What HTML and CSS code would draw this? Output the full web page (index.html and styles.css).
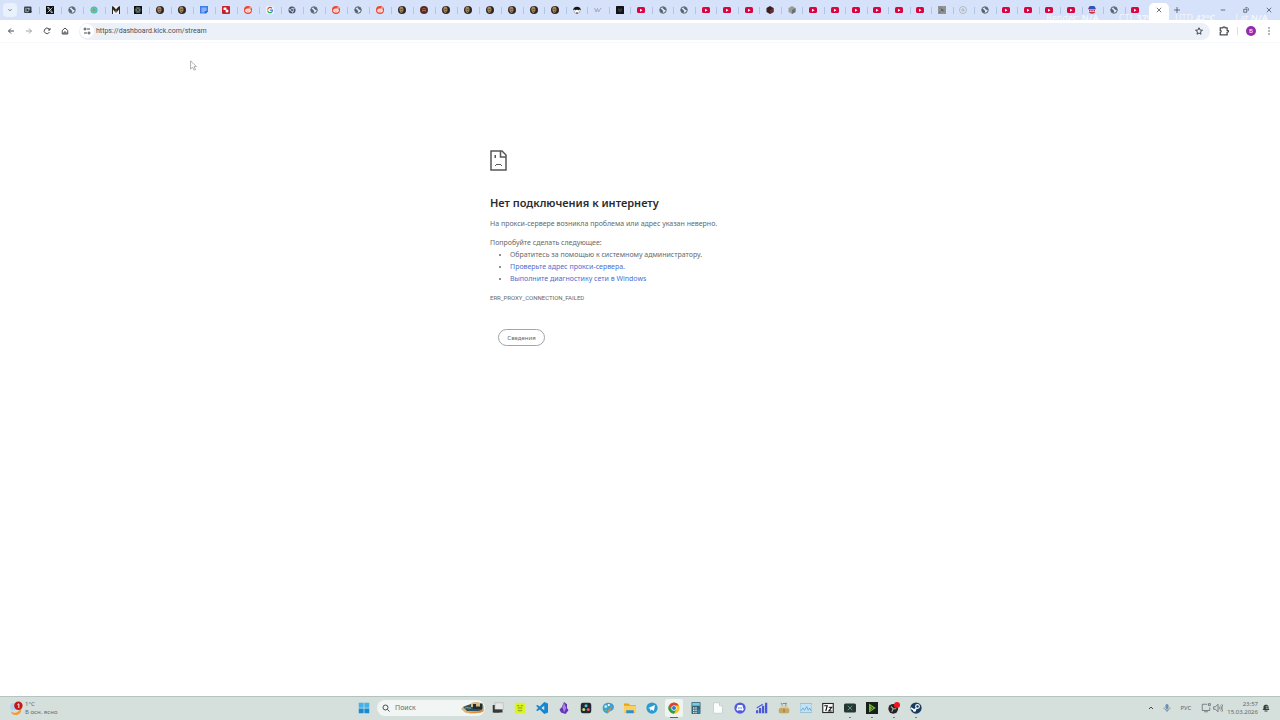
FILE: index.html
```
<!DOCTYPE html>
<html lang="ru">
<head>
    <meta charset="UTF-8">
    <meta name="viewport" content="width=device-width, initial-scale=1.0">
    <title>dashboard.kick.com</title>
    <link rel="stylesheet" href="styles.css">
</head>
<body>

    <!-- Favicons, used by the tab list in script.js -->
    <svg class="sprite" aria-hidden="true">
        <symbol id="media" viewBox="0 0 16 16"><rect x="0" y="1" width="15" height="13" rx="2" fill="#3d4a54"/><rect x="3" y="4" width="8" height="8" fill="#aebbc7"/><path d="M5 4v8l5-4z" fill="#222c33"/><circle cx="12" cy="11" r="3" fill="#26323a"/></symbol>
        <symbol id="x" viewBox="0 0 16 16"><rect width="16" height="16" fill="#0b0d10"/><path d="M3 3h3l7 10h-3zM13 3L3 13" stroke="#fff" stroke-width="1.3" fill="none"/></symbol>
        <symbol id="globe" viewBox="0 0 16 16"><circle cx="8" cy="8" r="6.500" fill="#d9e3f3" stroke="#54606f" stroke-width="2"/><path d="M2 6c2 0 4 1 5 2.500S8 10 8 11.500s-1 2-2 2C3 13 1 9 2 6zM7 2c1 1 0 2 1 3s2 1 2.500 2 1.500 1 3.500 1c0-3-2-6-7-6z" fill="#54606f"/></symbol>
        <symbol id="teal" viewBox="0 0 16 16"><circle cx="8" cy="8" r="7" fill="#4fb8a8"/><path d="M8 1v14M1 8h14M3 3l10 10M13 3L3 13" stroke="#6bd0bd" stroke-width="1.5"/><circle cx="8" cy="8" r="3" fill="#9a9a72"/></symbol>
        <symbol id="mask" viewBox="0 0 16 16"><rect width="16" height="16" fill="#f3f3f1"/><path d="M0 0l4 2 4 5 4-5 4-2v16h-2V7l-5 6H7L2 7v9H0z" fill="#29292b"/><path d="M7 9h2v5H7z" fill="#c5a073"/></symbol>
        <symbol id="atom" viewBox="0 0 16 16"><rect width="16" height="16" fill="#0d1414"/><g fill="none" stroke="#8d9995"><ellipse cx="8" cy="8" rx="6" ry="2.500"/><ellipse cx="8" cy="8" rx="6" ry="2.500" transform="rotate(60 8 8)"/><ellipse cx="8" cy="8" rx="6" ry="2.500" transform="rotate(120 8 8)"/></g></symbol>
        <symbol id="face" viewBox="0 0 16 16"><circle cx="8" cy="8" r="8" fill="#2c2523"/><path d="M4 2c4-2 7 0 7 5s-2 6-4 7c-4-1-6-8-3-12z" fill="#a3835b"/><path d="M5 7h4M6 11h3" stroke="#574334" stroke-width="1.5"/></symbol>
        <symbol id="redface" viewBox="0 0 16 16"><circle cx="8" cy="8" r="8" fill="#572b25"/><circle cx="8" cy="8" r="4" fill="#a36a50"/><path d="M5 7h6M6 11h4" stroke="#35201c" stroke-width="1.500"/></symbol>
        <symbol id="doc" viewBox="0 0 16 16"><path d="M0 0h16v11l-4 4H0z" fill="#3f7ce8"/><path d="M3 3h10v7H9v3H3z" fill="#86b2f7"/><path d="M11 15v-4h4z" fill="#1d4fb4"/></symbol>
        <symbol id="red" viewBox="0 0 16 16"><rect width="16" height="16" rx="2" fill="#c9202e"/><rect x="3" y="3" width="6" height="5" rx="1" fill="#fff"/><circle cx="10" cy="10" r="3" fill="#fff"/></symbol>
        <symbol id="reddit" viewBox="0 0 16 16"><circle cx="8" cy="8" r="8" fill="#ea4630"/><ellipse cx="8" cy="9" rx="5.500" ry="4" fill="#fff"/><circle cx="12" cy="4" r="1.500" fill="#fff"/><circle cx="6" cy="8" r="1.200" fill="#ee4b34"/><circle cx="10" cy="8" r="1.200" fill="#ee4b34"/><path d="M5.500 10.500c2 1.500 3 1.500 5 0" stroke="#ee4b34" fill="none"/></symbol>
        <symbol id="google" viewBox="0 0 16 16"><rect width="16" height="16" rx="4" fill="#f4f7fc"/><g fill="none" stroke-width="2.500"><path d="M12 4.500A5 5 0 0 0 3.500 6" stroke="#ea4335"/><path d="M3.500 6a5 5 0 0 0 0 4.500" stroke="#fbbc05"/><path d="M3.500 10.500a5 5 0 0 0 8 1.500" stroke="#34a853"/><path d="M11.500 12c1-1 1.500-2 1.500-4H8" stroke="#4285f4"/></g></symbol>
        <symbol id="darkchrome" viewBox="0 0 16 16"><circle cx="8" cy="8" r="7" fill="#454d61"/><path d="M8 4.500h6M5 10L2 5M11 10l-3 5" stroke="#dbe4f6" stroke-width="1.500"/><circle cx="8" cy="8" r="3" fill="#454d61" stroke="#dbe4f6" stroke-width="1.500"/></symbol>
        <symbol id="hat" viewBox="0 0 16 16"><circle cx="8" cy="9" r="6" fill="#fff" stroke="#777"/><path d="M0 8c1-9 15-9 16 0l-4-1-1 2-3-2-3 2-1-2z" fill="#141414"/><path d="M6 13h4v2H6z" fill="#333"/></symbol>
        <symbol id="w" viewBox="0 0 16 16"><path d="M1 4l3 8 3-7 2 7 5-8" stroke="#9a9c9f" stroke-width="1.500" fill="none"/></symbol>
        <symbol id="black" viewBox="0 0 16 16"><rect width="16" height="16" rx="1" fill="#101317"/><path d="M4 4l4 2 4-2v6l-4 3-4-3z" fill="#35363a"/></symbol>
        <symbol id="yt" viewBox="0 0 16 16"><rect y="2" width="16" height="12" rx="3" fill="#dc033e"/><path d="M6 5.500v6l5-3z" fill="#fff"/></symbol>
        <symbol id="redcube" viewBox="0 0 16 16"><path d="M8 0l7 4v8l-7 4-7-4V4z" fill="#3a2024"/><path d="M8 8l7-4v8l-7 4z" fill="#682d30"/></symbol>
        <symbol id="greycube" viewBox="0 0 16 16"><path d="M8 0l7 4v8l-7 4-7-4V4z" fill="#9a9b9b"/><path d="M8 8l7-4v8l-7 4z" fill="#6e7070"/></symbol>
        <symbol id="photo" viewBox="0 0 16 16"><rect width="16" height="16" fill="#8f9393"/><path d="M3 3h4v3H3zM9 7h4v5H9zM2 11h4v3H2z" fill="#7a7e80"/><circle cx="8" cy="8" r="2" fill="#4c5053"/></symbol>
        <symbol id="ring" viewBox="0 0 16 16"><circle cx="8" cy="8" r="7" fill="#dce5f2" stroke="#a2abb9" stroke-width="1.500"/><path d="M8 4v8M4 8h8" stroke="#a2abb9" stroke-width="1.500"/></symbol>
        <symbol id="club" viewBox="0 0 16 16"><circle cx="8" cy="8" r="7.500" fill="#d42f4a"/><path d="M1 6a7 7 0 0 1 14 0z" fill="#3552b5"/><path d="M0 7h16v5H0z" fill="#eef"/><path d="M2 8h3v3H2zM6.500 8h3v3h-3zM11 8h3v3h-3z" fill="#b32f4e"/></symbol>
    </svg>

    <header class="browser">
        <div class="tab-strip">
            <button class="tab-search" aria-label="Поиск вкладок">
                <svg class="icon-6" viewBox="0 0 8 8"><path d="M2 3l2 2 2-2" class="line"/></svg>
            </button>
            <div class="tabs" id="tabs"></div>
            <button class="tab-active" aria-label="Закрыть вкладку">
                <svg class="icon-6" viewBox="0 0 8 8"><path d="M1 1l6 6M7 1L1 7" class="line"/></svg>
            </button>
            <button class="tab-new" aria-label="Новая вкладка">
                <svg class="icon-6" viewBox="0 0 8 8"><path d="M4 0v8M0 4h8" class="line"/></svg>
            </button>
            <div class="window-buttons">
                <button aria-label="Свернуть"><svg class="icon-6" viewBox="0 0 8 8"><path d="M1 4h6" class="line"/></svg></button>
                <button aria-label="Развернуть"><svg class="icon-6" viewBox="0 0 8 8"><path d="M1 3h4v4H1zM3 1h3l1 1v3" class="line"/></svg></button>
                <button aria-label="Закрыть"><svg class="icon-6" viewBox="0 0 8 8"><path d="M1 1l6 6M7 1L1 7" class="line"/></svg></button>
            </div>
            <div class="stats"><span>Render: <b>N/A</b></span><span>CTL <b>37%</b></span><span>UTD <b>42°C</b></span><span>Lat <b>N/A</b></span></div>
        </div>

        <div class="toolbar">
            <button aria-label="Назад"><svg class="icon-8" viewBox="0 0 16 16"><path d="M14 8H3M8 3L3 8l5 5" class="line-2"/></svg></button>
            <button class="faded" aria-label="Вперёд"><svg class="icon-8" viewBox="0 0 16 16"><path d="M2 8h11M8 3l5 5-5 5" class="line-2"/></svg></button>
            <button aria-label="Обновить"><svg class="icon-8" viewBox="0 0 16 16"><path d="M13 10a5.500 5.500 0 1 1-1-6l2 2M14 2v4h-4" class="line-2"/></svg></button>
            <button aria-label="Домой"><svg class="icon-8" viewBox="0 0 16 16"><path d="M2.500 7L8 2l5.500 5v7h-11zM6 14v-4h4v4" class="line-2"/></svg></button>
            <div class="address">
                <button class="site-info" aria-label="О сайте"><svg class="icon-8" viewBox="0 0 16 16"><path d="M8 4h6M2 12h6" class="line-2"/><circle cx="4" cy="4" r="2" class="line-2"/><circle cx="12" cy="12" r="2" class="line-2"/></svg></button>
                <input type="text" aria-label="Адрес" value="https://dashboard.kick.com/stream">
                <button class="star" aria-label="Закладка"><svg class="icon-8" viewBox="0 0 16 16"><path d="M8 1.500l2 4.500 5 .5-4 3 1 5-4-2.500-4 2.500 1-5-4-3 5-.5z" class="line-2"/></svg></button>
            </div>
            <div class="toolbar-right">
                <button aria-label="Расширения"><svg class="icon-10" viewBox="0 0 16 16"><path d="M2 3h4c0-2 4-2 4 0h3v4c3 0 3 3 0 3v4H2v-4c2 0 2-3 0-3z" class="line-1 bold"/></svg></button>
                <span class="divider"></span>
                <button class="avatar" aria-label="Профиль">В</button>
                <button aria-label="Меню"><svg class="icon-8" viewBox="0 0 16 16" fill="#474b52"><circle cx="8" cy="2" r="1.500"/><circle cx="8" cy="8" r="1.500"/><circle cx="8" cy="14" r="1.500"/></svg></button>
            </div>
        </div>
    </header>

    <main class="page">
        <div class="error">
            <svg class="sad" viewBox="0 0 17 21"><path d="M1 1h11l4 4v15H1z" fill="none" stroke="#55575a" stroke-width="1.500"/><path d="M10.500 1v6H16" fill="none" stroke="#55575a" stroke-width="1.500"/><path d="M4.500 5h1.500v3H4.500zM6 14h5v1H6zM5 15h1v1H5zM11 15h1v1h-1z" fill="#55575a"/></svg>
            <h1>Нет подключения к интернету</h1>
            <p>На прокси-сервере возникла проблема или адрес указан неверно.</p>
            <p class="try">Попробуйте сделать следующее:</p>
            <ul>
                <li>Обратитесь за помощью к системному администратору.</li>
                <li><a href="#">Проверьте адрес прокси-сервера.</a></li>
                <li><a href="#">Выполните диагностику сети в Windows</a></li>
            </ul>
            <div class="error-code">ERR_PROXY_CONNECTION_FAILED</div>
            <button class="details">Сведения</button>
        </div>
    </main>

    <footer class="taskbar">
        <div class="weather">
            <svg class="weather-icon" viewBox="0 0 16 16"><circle cx="5" cy="6" r="4" fill="#b4d3ef"/><path d="M12 6a6 6 0 0 1-10 5c0 5 11 6 11-2z" fill="#f29a2e"/><circle cx="10" cy="5" r="4.500" fill="#c3171c"/><path d="M9 4l1.500-1v4.500" fill="none" stroke="#fff"/></svg>
            <div><div>1°C</div><div>В осн. ясно</div></div>
        </div>

        <div class="apps">
            <button aria-label="Пуск"><svg viewBox="0 0 16 16"><path d="M1 1h6.500v6.500H1zM8.500 1H15v6.500H8.500z" fill="#3fb3ea"/><path d="M1 8.500h6.500V15H1zM8.500 8.500H15V15H8.500z" fill="#168bd2"/></svg></button>
            <label class="search">
                <svg class="icon-8" viewBox="0 0 16 16"><circle cx="7" cy="7" r="5" class="line-2"/><path d="M11 11l4 4" class="line-2"/></svg>
                <input type="text" placeholder="Поиск" aria-label="Поиск">
                <svg class="boat" viewBox="0 0 48 24"><path d="M0 14C8 4 14 8 22 2s20 0 24 6v10c-8 6-30 6-38 3z" fill="#d8b883"/><path d="M4 10l16-6v6h22v8H12z" fill="#34505a"/><path d="M24 4h6v5h8V3h5v11H24z" fill="#1d2f36"/><path d="M6 17c10 4 25 3 38-2v4c-10 5-28 4-38-2z" fill="#dd8f3f"/><path d="M8 12c4-2 8 1 12 0" stroke="#83b1ae" stroke-width="2" fill="none"/></svg>
            </label>
            <button aria-label="Представление задач"><svg viewBox="0 0 16 16"><path d="M1 4h9v10H1z" fill="#333"/><path d="M4 1h11v9H4z" fill="#e5e7e8" stroke="#b7bcbc"/><path d="M2 10h12v4H2z" fill="#363a3b"/></svg></button>
            <button aria-label="Заметки"><svg viewBox="0 0 16 16"><rect x="1" y="1" width="14" height="14" rx="1" fill="#dcf51d"/><path d="M4 5h3M9 5h3M5 8h6M5 11c2 1 4 1 6 0" stroke="#68762a" fill="none"/></svg></button>
            <button aria-label="Visual Studio Code"><svg viewBox="0 0 16 16"><path d="M11 0l5 2v12l-5 2-6-6-3 2-2-1 3-3-3-3 2-1 3 2z" fill="#1686cf"/><path d="M11 5v6L7 8z" fill="#d7e1de"/></svg></button>
            <button aria-label="Obsidian"><svg viewBox="0 0 16 16"><path d="M8 0l4 3v5l2 3-4 5-6-2-2-4 3-3z" fill="#6633b5"/><path d="M8 1L6 7l2 7 3-6z" fill="#a487e6"/></svg></button>
            <button aria-label="DaVinci Resolve"><svg viewBox="0 0 16 16"><rect x="1" y="1" width="14" height="14" rx="3" fill="#202932"/><circle cx="8" cy="5" r="2" fill="#60bce2"/><circle cx="5" cy="10" r="2" fill="#c6d96b"/><circle cx="11" cy="10" r="2" fill="#e25e63"/></svg></button>
            <button aria-label="Paint"><svg viewBox="0 0 16 16"><path d="M1 9C0 2 8-1 13 2s3 9-1 10-3 4-6 3-5-3-5-6z" fill="#3b9ed1"/><circle cx="5" cy="6" r="2" fill="#bde5ed"/><circle cx="9" cy="4" r="1.500" fill="#fff"/><path d="M14 5l-4 8-3 2 1-4z" fill="#d4904d"/><circle cx="5" cy="11" r="1.500" fill="#57b87a"/></svg></button>
            <button aria-label="Проводник"><svg viewBox="0 0 16 16"><path d="M0 2h6l2 2h8v10H0z" fill="#e2a321"/><path d="M0 5h16v9H0z" fill="#fad15b"/><path d="M3 11h10v4H3z" fill="#2c8bd4"/></svg></button>
            <button aria-label="Telegram"><svg viewBox="0 0 16 16"><circle cx="8" cy="8" r="7.500" fill="#289bd3"/><path d="M3 8l9-4-1.500 8-3-2-1.500 2-.5-3z" fill="#fff"/></svg></button>
            <button class="current" aria-label="Chrome"><svg viewBox="0 0 16 16"><circle cx="8" cy="8" r="7.500" fill="#f5c31e"/><path d="M1.500 4.200A7.500 7.500 0 0 1 14.500 4.500H8L5 10z" fill="#df4032"/><path d="M1.500 4.200A7.500 7.500 0 0 0 8 15.500l3-5.500-6 0z" fill="#279b50"/><circle cx="8" cy="8" r="3.500" fill="#fff"/><circle cx="8" cy="8" r="2.700" fill="#3477dc"/></svg></button>
            <button aria-label="Калькулятор"><svg viewBox="0 0 16 16"><rect x="2" width="12" height="16" rx="1" fill="#3b626f"/><path d="M3 1h10v4H3z" fill="#74cbe5"/><path d="M4 7h2v2H4zM7 7h2v2H7zM4 10h2v2H4zM7 10h2v2H7zM4 13h2v2H4zM7 13h2v2H7z" fill="#cce0e5"/><path d="M10 10h3v5h-3z" fill="#2c86be"/></svg></button>
            <button aria-label="Документ"><svg viewBox="0 0 16 16"><path d="M2 1h8l4 4v10H2z" fill="#fbfdfc" stroke="#c0c8c6"/><path d="M10 1v4h4" fill="#e4e8e7" stroke="#bbc3c1"/></svg></button>
            <button aria-label="Discord"><svg viewBox="0 0 16 16"><circle cx="8" cy="8" r="7.500" fill="#525ce0"/><path d="M5 4h6l2 6-2 2-1-1H6l-1 1-2-2z" fill="#fff"/><circle cx="6.500" cy="8" r="1" fill="#525ce0"/><circle cx="9.500" cy="8" r="1" fill="#525ce0"/></svg></button>
            <button aria-label="Монитор"><svg viewBox="0 0 16 16"><path d="M0 11h3v4H0zM4 8h3v7H4zM8 5h3v10H8zM12 1h3v14h-3z" fill="#4858dc"/><path d="M1 8l8-5" stroke="#4858dc" stroke-width="1.500"/></svg></button>
            <button aria-label="Торговля"><svg viewBox="0 0 16 16"><path d="M4 1l2 4M6 2h5M11 1l-1 5" stroke="#647177"/><path d="M3 5h8v3H3z" fill="#c9d2cd"/><rect x="1" y="8" width="14" height="7" rx="2" fill="#c6a865"/><path d="M8 9v5" stroke="#806a3f"/><circle cx="11" cy="7" r="2" fill="#e0c387"/></svg></button>
            <button aria-label="Графики"><svg viewBox="0 0 16 16"><rect y="2" width="16" height="12" rx="1" fill="#c2e2f5" stroke="#8ab5cf"/><path d="M1 12l3-4 2 3 3-5 2 5 2-3 2 4" fill="none" stroke="#5b9ec7"/></svg></button>
            <button aria-label="7-Zip"><svg viewBox="0 0 16 16"><rect x="1" y="2" width="14" height="12" fill="#fff" stroke="#252827" stroke-width="1.500"/><path d="M3 5h4L5 12M9 7h4l-4 5h4" fill="none" stroke="#111" stroke-width="1.500"/></svg></button>
            <button class="running" aria-label="Терминал"><svg viewBox="0 0 16 16"><rect y="2" width="16" height="12" rx="2" fill="#253733"/><path d="M5 5l6 6M11 5l-6 6" stroke="#65b49b"/></svg></button>
            <button class="running" aria-label="Плеер"><svg viewBox="0 0 16 16"><rect width="16" height="16" fill="#162016"/><path d="M4 2v12l9-6z" fill="#70bd35"/><path d="M6 6l3 2-3 3" fill="none" stroke="#162016"/></svg></button>
            <button class="running" aria-label="OBS"><svg viewBox="0 0 16 16"><circle cx="7" cy="9" r="6.500" fill="#252323"/><path d="M7 9L4 6M7 9l4 0M7 9l-2 4" stroke="#aaa" stroke-width="1.500"/><circle cx="12" cy="4" r="4" fill="#eb171d"/></svg></button>
            <button class="running" aria-label="Steam"><svg viewBox="0 0 16 16"><circle cx="8" cy="8" r="7.500" fill="#183b60"/><circle cx="10" cy="6" r="2.500" fill="#183b60" stroke="#fff" stroke-width="1.500"/><path d="M1 8l5 3 3-3" stroke="#fff" stroke-width="2" fill="none"/><circle cx="6" cy="11" r="2" fill="#fff"/></svg></button>
        </div>

        <div class="tray">
            <div class="tray-icons">
                <svg class="icon-8" viewBox="0 0 16 16"><path d="M4 10l4-4 4 4" class="line-2"/></svg>
                <svg class="icon-8" viewBox="0 0 16 16"><rect x="5" y="0" width="6" height="10" rx="3" fill="#6a8eb3"/><path d="M2 7c0 7 12 7 12 0M8 12v4" fill="none" stroke="#60778d" stroke-width="1.500"/></svg>
            </div>
            <span class="lang">РУС</span>
            <div class="tray-status">
                <svg class="icon-10" viewBox="0 0 16 16"><path d="M10 2H2v10h12V7M5 14h6M12 1h3v3h-3z" class="line-1"/></svg>
                <svg class="icon-10" viewBox="0 0 16 16"><path d="M1 6h3l4-4v12l-4-4H1zM10 6c1 1 1 3 0 4M12 4c2 2 2 6 0 8M14 2c3 4 3 8 0 12" class="line-1"/></svg>
            </div>
            <div class="clock"><div>23:57</div><div>15.03.2026</div></div>
            <svg class="icon-8" viewBox="0 0 16 16"><path d="M1 12l2-3V5c1-5 9-5 10 0v4l2 3z" fill="#333b3a"/><path d="M5 14h6" fill="none" stroke="#333b3a" stroke-width="2"/><path d="M7 5h4L8 9h4" stroke="#d5dfdc" fill="none"/></svg>
        </div>
    </footer>

    <svg class="cursor" viewBox="0 0 12 18"><path d="M1 1v14l3.500-3 2.500 5 2.500-1L7 11h4z" fill="#fff" stroke="#777"/></svg>

    <script src="script.js"></script>
</body>
</html>
```

FILE: styles.css
```
* {
    box-sizing: border-box;
}
body {
    margin: 0;
    min-height: 100vh;
    display: flex;
    flex-direction: column;
    background-color: #fff;
    color: #66696d;
    font-family: "Noto Sans", "Open Sans", sans-serif;
    font-size: 7px;
    line-height: 12px;
}
button {
    display: flex;
    align-items: center;
    justify-content: center;
    padding: 0;
    border: none;
    background: none;
    color: inherit;
    font: inherit;
}
input {
    flex: 1;
    min-width: 0;
    padding: 0;
    border: none;
    outline: none;
    background: none;
    color: #4c5158;
    font: inherit;
}
svg {
    display: block;
    flex: none;
}
.sprite {
    position: absolute;
    width: 0;
    height: 0;
}
.icon-6 {
    width: 6px;
    height: 6px;
}
.icon-8 {
    width: 8px;
    height: 8px;
}
.icon-10 {
    width: 10px;
    height: 10px;
}
.line, .line-1, .line-2 {
    fill: none;
    stroke: #474b52;
}
.line-2, .bold {
    stroke-width: 2;
}

/* Tabs */
.tab-strip {
    position: relative;
    display: flex;
    height: 20px;
    background-color: #d5e2fa;
}
.tab-search {
    width: 14px;
    height: 14px;
    margin: 3px 0 0 3px;
    border-radius: 4px;
    background-color: #e9f1fc;
}
.tabs {
    flex: 1;
    display: flex;
}
.tab {
    flex: 1;
    display: flex;
    align-items: center;
    justify-content: center;
    position: relative;
}
/* the first tabs take the spare pixels of the strip */
.tab:nth-child(-n+23) {
    flex: 0 0 22px;
}
.tab::after {
    content: "";
    position: absolute;
    right: -1px;
    top: 7px;
    width: 1px;
    height: 7px;
    background-color: #b0c4e5;
}
.tab:last-child::after {
    display: none;
}
.tab svg {
    width: 8px;
    height: 8px;
}
.tab-active {
    width: 20px;
    margin: 3px 0 0 3px;
    padding-bottom: 3px;
    border-radius: 5px 5px 0 0;
    background-color: #fff;
}
.tab-new {
    width: 16px;
}
.window-buttons {
    display: flex;
    margin-left: 26px;
}
.window-buttons button {
    width: 23px;
}
.stats {
    position: absolute;
    right: 12px;
    top: 12px;
    display: flex;
    gap: 20px;
    color: #fff;
    font-size: 9px;
    opacity: 0.7;
}

/* Toolbar */
.toolbar {
    display: flex;
    align-items: center;
    height: 23px;
    padding-left: 2px;
    border-bottom: 1px solid #f6f8fb;
}
.toolbar > button {
    width: 18px;
    height: 18px;
}
.faded {
    opacity: 0.5;
}
.address {
    flex: 1;
    display: flex;
    align-items: center;
    height: 17px;
    margin-left: 5px;
    padding: 0 7px 0 1px;
    border-radius: 9px;
    background-color: #ebf0f9;
}
.address input {
    font-family: Roboto, sans-serif;
}
.site-info {
    width: 14px;
    height: 14px;
    margin-right: 2px;
    border-radius: 50%;
    background-color: #fff;
}
.toolbar-right {
    display: flex;
    align-items: center;
    gap: 8px;
    padding: 0 7px 0 9px;
}
.divider {
    width: 1px;
    height: 8px;
    background-color: #d3ddee;
}
.avatar {
    width: 10px;
    height: 10px;
    border-radius: 50%;
    background-color: #962bab;
    color: #fff;
    font-size: 6px;
}
.toolbar-right .avatar + button {
    margin-left: 1px;
}

/* Error page */
.page {
    flex: 1;
}
.error {
    max-width: 300px;
    margin: 0 auto;
    padding-top: 107px;
}
.sad {
    width: 17px;
    height: 21px;
}
h1 {
    margin: 24px 0 7px;
    color: #2b2c2f;
    font-size: 11px;
    font-weight: 600;
    line-height: 16px;
}
p {
    margin: 0 0 7px;
}
.try {
    margin: 0;
}
ul {
    margin: 0 0 7px;
    padding-left: 20px;
}
a {
    color: #4a6fd0;
    text-decoration: none;
}
.error-code {
    font-family: Roboto, sans-serif;
    font-size: 6px;
}
.details {
    width: 47px;
    height: 17px;
    margin: 25px 0 0 8px;
    border: 1px solid #a0a3a7;
    border-radius: 9px;
    font-size: 6px;
}

/* Taskbar */
.taskbar {
    display: grid;
    grid-template-columns: 1fr auto 1fr;
    align-items: center;
    height: 24px;
    padding-bottom: 1px;
    border-top: 1px solid #b5c3bf;
    background-color: #d5dfdc;
    font-size: 6px;
    line-height: 8px;
}
.weather {
    display: flex;
    align-items: center;
    gap: 1px;
    padding-left: 9px;
}
.weather-icon {
    width: 15px;
    height: 15px;
}
.apps {
    display: flex;
    align-items: center;
}
.apps button {
    position: relative;
    width: 22px;
    height: 22px;
}
.apps button svg {
    width: 12px;
    height: 12px;
}
.apps .current::before {
    content: "";
    position: absolute;
    inset: 2px;
    border-radius: 2px;
    background-color: #eff4f2;
}
.apps .current svg {
    position: relative;
}
.current::after, .running::after {
    content: "";
    position: absolute;
    left: 50%;
    bottom: 1px;
    width: 8px;
    height: 1px;
    background-color: #1676c5;
    transform: translateX(-50%);
}
.running::after {
    width: 2px;
    background-color: #75827f;
}
.search {
    display: flex;
    align-items: center;
    gap: 5px;
    width: 108px;
    height: 16px;
    margin: 0 2px;
    padding-left: 5px;
    border-radius: 8px;
    background-color: #f1f6f4;
    font-size: 7px;
}
.search input::placeholder {
    color: #666d6b;
    opacity: 1;
}
.boat {
    width: 24px;
    height: 12px;
}
.tray {
    display: flex;
    align-items: center;
    justify-content: flex-end;
    gap: 4px;
    padding-right: 10px;
}
.tray-icons {
    display: flex;
    gap: 8px;
}
.lang {
    margin: 0 6px;
}
.tray-status {
    display: flex;
    gap: 2px;
}
.clock {
    text-align: right;
}

.cursor {
    position: absolute;
    left: 190px;
    top: 60px;
    width: 7px;
    height: 11px;
}
```

FILE: script.js
```
const tabs = [
    'media', 'x', 'globe', 'teal', 'mask', 'atom', 'face', 'face', 'doc', 'red', 'reddit', 'google', 'darkchrome',
    'globe', 'reddit', 'globe', 'reddit', 'face', 'redface', 'face', 'face', 'face', 'face', 'face', 'face', 'hat',
    'w', 'black', 'yt', 'globe', 'globe', 'yt', 'yt', 'yt', 'redcube', 'greycube', 'yt', 'yt', 'yt',
    'yt', 'yt', 'yt', 'photo', 'ring', 'globe', 'yt', 'yt', 'yt', 'yt', 'club', 'globe', 'yt'
];

document.getElementById('tabs').innerHTML = tabs
    .map((icon) => `<div class="tab"><svg><use href="#${icon}"></use></svg></div>`)
    .join('');
```
